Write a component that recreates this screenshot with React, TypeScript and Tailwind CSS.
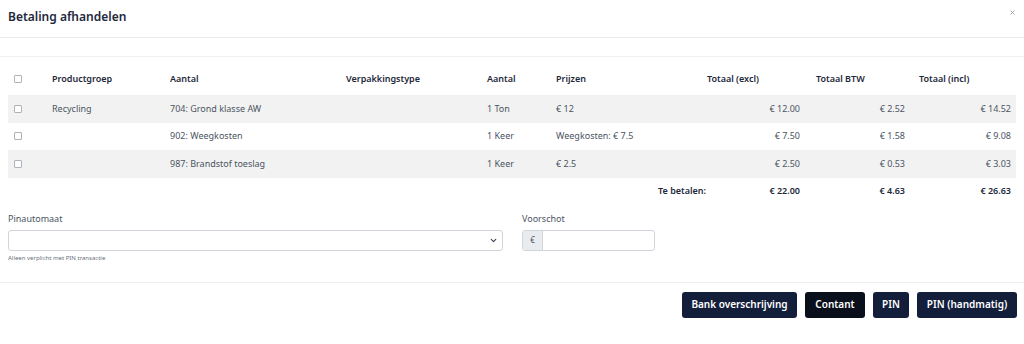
import { ChevronDown, X } from "lucide-react";

type Row = {
  groep: string;
  artikel: string;
  verpakking: string;
  aantal: string;
  prijs: string;
  excl: string;
  btw: string;
  incl: string;
};

const rows: Row[] = [
  { groep: "Recycling", artikel: "704: Grond klasse AW", verpakking: "", aantal: "1 Ton", prijs: "€ 12", excl: "€ 12.00", btw: "€ 2.52", incl: "€ 14.52" },
  { groep: "", artikel: "902: Weegkosten", verpakking: "", aantal: "1 Keer", prijs: "Weegkosten: € 7.5", excl: "€ 7.50", btw: "€ 1.58", incl: "€ 9.08" },
  { groep: "", artikel: "987: Brandstof toeslag", verpakking: "", aantal: "1 Keer", prijs: "€ 2.5", excl: "€ 2.50", btw: "€ 0.53", incl: "€ 3.03" },
];

const cols = "grid grid-cols-[38px_118px_176px_141px_69px_156px_104px_103px_103px]";

function Box() {
  return <span className="block h-[8px] w-[8px] rounded-[1px] border border-[#aeb3bb] bg-white" />;
}

export default function App() {
  return (
    <div className="h-[344px] w-[1024px] bg-white font-['Noto_Sans',sans-serif] text-[#1e293b]">
      {/* kop */}
      <div className="flex h-[38px] items-start justify-between border-b border-[#e9eaec] pl-[8px] pr-[8px]">
        <h2 className="pt-[7px] text-[12px] font-semibold leading-[20px] text-[#1e293b]">Betaling afhandelen</h2>
        <X className="mt-[9px] h-[7px] w-[7px] text-[#9ca3af]" strokeWidth={3} />
      </div>
      <div className="h-[19px] border-b border-[#eeeff1]" />

      {/* tabel */}
      <div className="px-[8px] text-[9px] leading-[12px]">
        <div className={`${cols} h-[38px] items-center pt-[6px] font-semibold text-[#1e293b]`}>
          <div className="pl-[6px]"><Box /></div>
          <div className="pl-[6px]">Productgroep</div>
          <div className="pl-[6px]">Aantal</div>
          <div className="pl-[6px]">Verpakkingstype</div>
          <div className="pl-[6px]">Aantal</div>
          <div className="pl-[6px]">Prijzen</div>
          <div className="pl-[1px]">Totaal (excl)</div>
          <div className="pl-[6px]">Totaal BTW</div>
          <div className="pl-[6px]">Totaal (incl)</div>
        </div>
        {rows.map((r, i) => (
          <div
            key={r.artikel}
            className={`${cols} h-[27.6px] items-center text-[#4b5563] ${i % 2 === 0 ? "bg-[#f2f2f2]" : "bg-white"}`}
          >
            <div className="pl-[6px]"><Box /></div>
            <div className="pl-[6px]">{r.groep}</div>
            <div className="pl-[6px]">{r.artikel}</div>
            <div className="pl-[6px]">{r.verpakking}</div>
            <div className="pl-[6px]">{r.aantal}</div>
            <div className="pl-[6px]">{r.prijs}</div>
            <div className="pr-[10px] text-right">{r.excl}</div>
            <div className="pr-[8px] text-right">{r.btw}</div>
            <div className="pr-[5px] text-right">{r.incl}</div>
          </div>
        ))}
        <div className={`${cols} h-[27px] items-center font-semibold text-[#1e293b]`}>
          <div className="col-span-6 text-right">Te betalen:</div>
          <div className="pr-[10px] text-right">€ 22.00</div>
          <div className="pr-[8px] text-right">€ 4.63</div>
          <div className="pr-[5px] text-right">€ 26.63</div>
        </div>
      </div>

      {/* velden */}
      <div className="mt-[8px] flex gap-[19px] px-[8px] pb-[19px]">
        <div className="w-[495px]">
          <label className="block text-[9px] leading-[12px] text-[#4b5563]">Pinautomaat</label>
          <div className="mt-[5px] flex h-[21px] items-center justify-end rounded-[3px] border border-[#d1d5db] bg-white pr-[4px]">
            <ChevronDown className="h-[9px] w-[9px] text-[#374151]" strokeWidth={3} />
          </div>
          <p className="mt-[2px] text-[6px] leading-[10px] text-[#6b7280]">Alleen verplicht met PIN transactie</p>
        </div>
        <div className="w-[133px]">
          <label className="block text-[9px] leading-[12px] text-[#4b5563]">Voorschot</label>
          <div className="mt-[5px] flex h-[21px] rounded-[3px] border border-[#d1d5db] bg-white">
            <span className="flex w-[20px] items-center justify-center rounded-l-[3px] border-r border-[#d1d5db] bg-[#e9ecef] text-[8px] text-[#4b5563]">€</span>
          </div>
        </div>
      </div>

      {/* voet */}
      <div className="flex justify-end gap-[8px] border-t border-[#eeeff1] px-[7px] pt-[9px] text-[10px] font-semibold text-white">
        <button className="h-[26px] w-[115px] rounded-[3px] bg-[#131e3b]">Bank overschrijving</button>
        <button className="h-[26px] w-[60px] rounded-[3px] bg-[#0a0f1c]">Contant</button>
        <button className="h-[26px] w-[36px] rounded-[3px] bg-[#131e3b]">PIN</button>
        <button className="h-[26px] w-[100px] rounded-[3px] bg-[#131e3b]">PIN (handmatig)</button>
      </div>
    </div>
  );
}
